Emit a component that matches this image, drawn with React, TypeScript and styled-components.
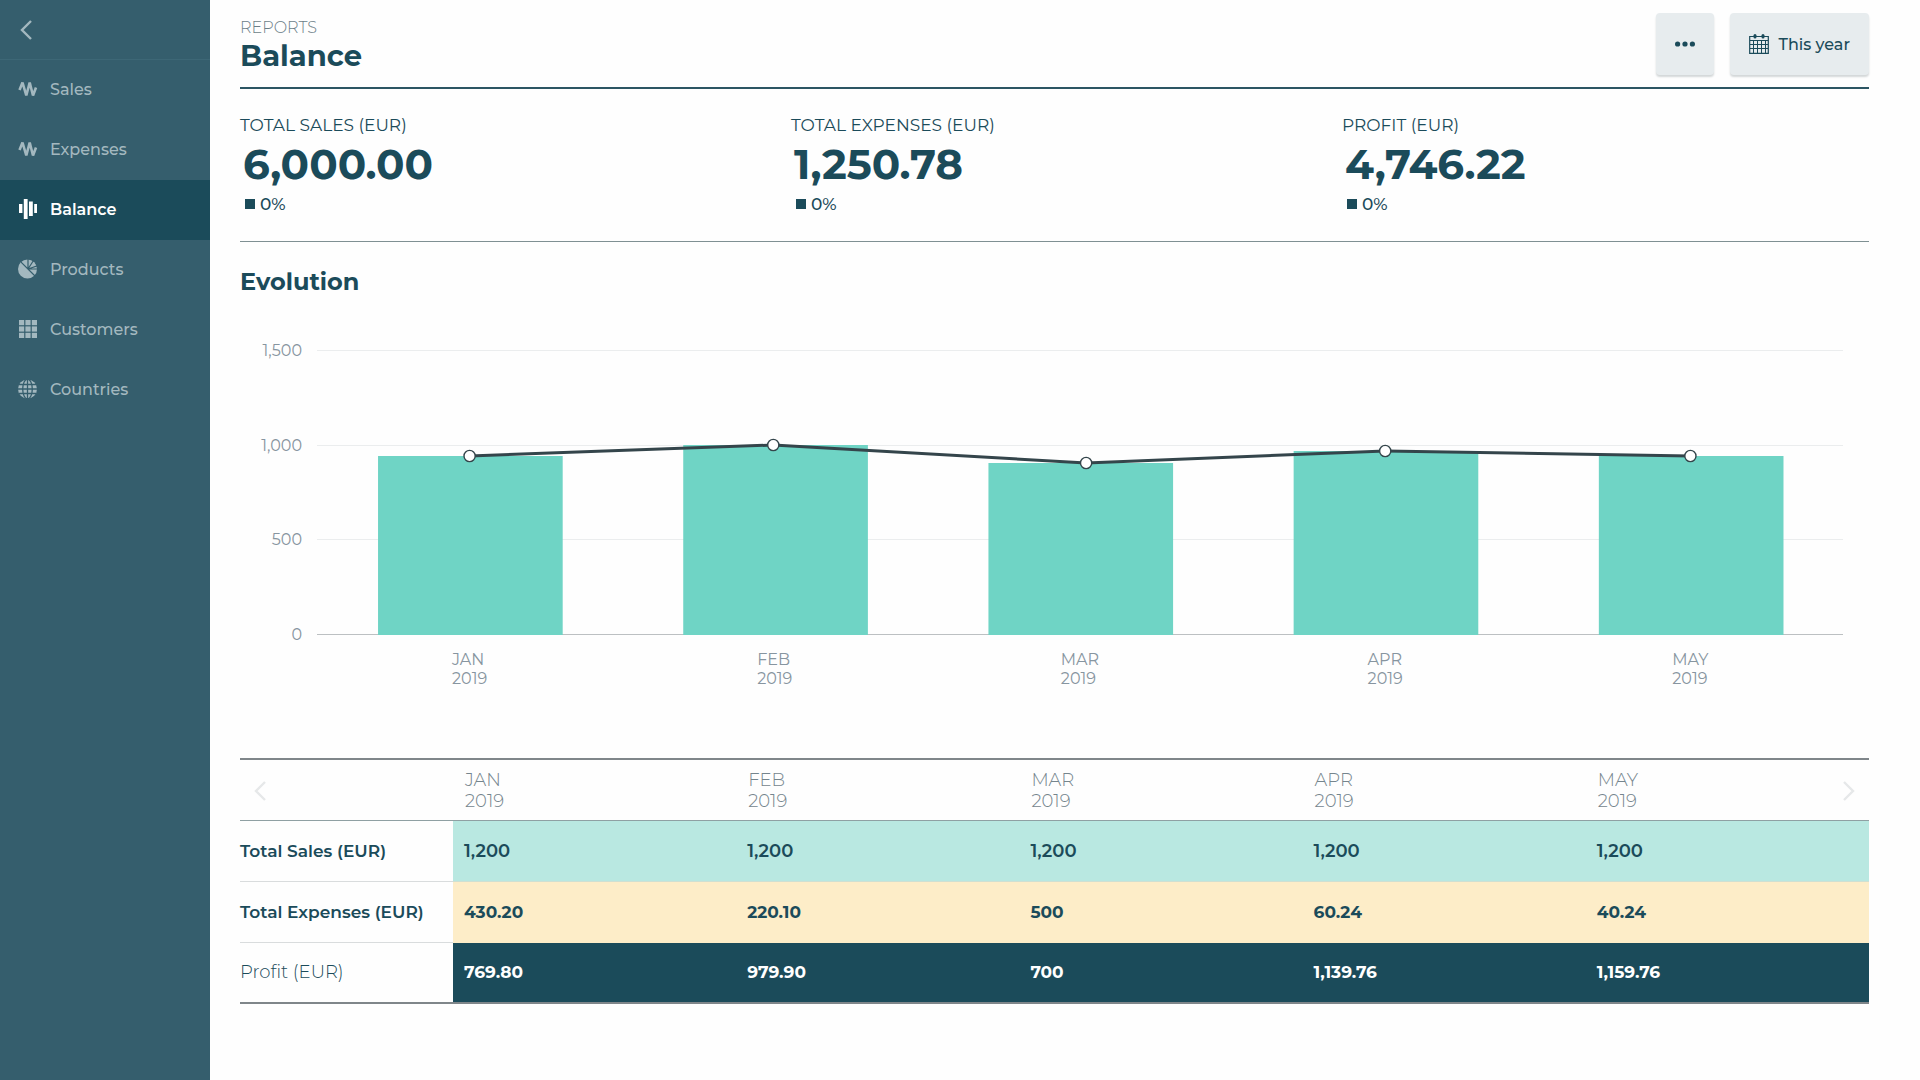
import React from "react";
import styled, { createGlobalStyle } from "styled-components";

const ink = "#1b4b5a";
const muted = "#8795a0";

const GlobalStyle = createGlobalStyle`
  *, *::before, *::after { box-sizing: border-box; }
  body {
    margin: 0;
    background: #fefefe;
    color: ${ink};
    font-family: Montserrat, Inter, "Liberation Sans", sans-serif;
    font-size: 16px;
  }
  button { font: inherit; color: inherit; border: 0; background: none; padding: 0; cursor: pointer; }
  h1, h2, p, dl, dd, dt, ul { margin: 0; padding: 0; }
`;

const Page = styled.div`
  display: grid;
  grid-template-columns: 210px minmax(0, 1fr);
  min-height: 100vh;
`;

/* Sidebar */

const Sidebar = styled.nav`
  background: #355e6d;
  color: #a3b8bf;
`;

const BackButton = styled.button`
  display: flex;
  align-items: center;
  width: 100%;
  height: 60px;
  padding: 0 18px;
  border-bottom: 1px solid #3d6776;
`;

const NavList = styled.ul`
  list-style: none;
`;

const NavLink = styled.a<{ $active: boolean }>`
  display: flex;
  align-items: center;
  gap: 12px;
  height: 60px;
  padding: 0 18px 2px;
  font-weight: ${(p) => (p.$active ? 600 : 500)};
  text-decoration: none;
  color: ${(p) => (p.$active ? "#ffffff" : "inherit")};
  background: ${(p) => (p.$active ? ink : "transparent")};
`;

/* Main column */

const Main = styled.main`
  padding: 0 51px 0 30px;
`;

const Header = styled.header`
  display: flex;
  justify-content: space-between;
  align-items: flex-start;
  height: 89px;
  padding-top: 13px;
  border-bottom: 2px solid #2c5563;
`;

const Eyebrow = styled.p`
  padding-top: 2px;
  line-height: 26px;
  font-weight: 300;
  color: #6c7f88;
`;

const Title = styled.h1`
  font-size: 29px;
  line-height: 29px;
  font-weight: 700;
`;

const Actions = styled.div`
  display: flex;
  gap: 16px;
`;

const ActionButton = styled.button`
  display: flex;
  align-items: center;
  gap: 10px;
  height: 62px;
  padding: 0 19px;
  border-radius: 4px;
  background: #e7ecee;
  box-shadow: 0 2px 2px #d3d7d8;
  font-weight: 500;
`;

const Kpis = styled.dl`
  display: grid;
  grid-template-columns: repeat(3, minmax(0, 1fr));
  gap: 24px;
  height: 153px;
  padding-top: 24px;
  border-bottom: 1px solid #7f9093;
`;

const KpiLabel = styled.dt`
  font-size: 17px;
  line-height: 24px;
`;

const KpiValue = styled.dd`
  padding-left: 3px;
  font-size: 42px;
  line-height: 54px;
  font-weight: 700;
`;

const KpiChange = styled.dd`
  display: flex;
  align-items: center;
  gap: 5px;
  padding-left: 5px;
  font-size: 17px;
  line-height: 26px;
  font-weight: 500;

  &::before {
    content: "";
    width: 10px;
    height: 10px;
    background: ${ink};
  }
`;

const SectionTitle = styled.h2`
  padding: 24px 0;
  font-size: 24px;
  line-height: 32px;
  font-weight: 700;
`;

/* Chart */

const Chart = styled.figure`
  display: grid;
  grid-template-columns: 62px minmax(0, 1fr);
  column-gap: 15px;
  margin: 0 26px 0 0;
  padding-top: 19px;
  color: ${muted};
`;

const YAxis = styled.div`
  display: flex;
  flex-direction: column;
  justify-content: space-between;
  height: 304px;
  line-height: 20px;
  text-align: right;
`;

const Plot = styled.svg`
  display: block;
  width: 100%;
  height: 304px;
`;

const XAxis = styled.div`
  grid-column: 2;
  display: grid;
  grid-template-columns: repeat(5, minmax(0, 1fr));
  justify-items: center;
  padding-top: 5px;
  line-height: 19px;
`;

/* Table */

const Table = styled.table`
  width: 100%;
  margin-top: 70px;
  table-layout: fixed;
  border-collapse: collapse;
  border-top: 2px solid #7f868a;
  border-bottom: 2px solid #7f868a;
`;

const LabelCol = styled.col`
  width: 213px;
`;

const HeadCell = styled.th`
  height: 61px;
  padding: 2px 12px 0;
  border-bottom: 1px solid #8fa0a3;
  color: #75858d;
  font-size: 18px;
  line-height: 21px;
  font-weight: 300;
  text-align: left;
`;

const HeadContent = styled.div`
  display: flex;
  justify-content: space-between;
  align-items: center;
`;

const PagerButton = styled.button`
  display: flex;
  color: #e6e8e9;
`;

const RowHead = styled.th<{ $light?: boolean }>`
  height: 60px;
  padding: 0;
  border-bottom: 1px solid #d9dcdd;
  font-size: ${(p) => (p.$light ? 18 : 17)}px;
  font-weight: ${(p) => (p.$light ? 300 : 600)};
  text-align: left;
`;

type Tone = "sales" | "expenses" | "profit";

const tones: Record<Tone, { background: string; color: string; border: string }> = {
  sales: { background: "#b9e8e1", color: ink, border: "#cfe0d2" },
  expenses: { background: "#fdedc8", color: ink, border: "#fdedc8" },
  profit: { background: ink, color: "#ffffff", border: ink },
};

const ValueCell = styled.td<{ $tone: Tone }>`
  height: 61px;
  padding: 0 11px;
  background: ${(p) => tones[p.$tone].background};
  color: ${(p) => tones[p.$tone].color};
  border-bottom: 1px solid ${(p) => tones[p.$tone].border};
  font-size: ${(p) => (p.$tone === "sales" ? 18 : 17)}px;
  font-weight: ${(p) => (p.$tone === "sales" ? 600 : 700)};
`;

/* Icons */

const Icon = ({ children }: { children: React.ReactNode }) => (
  <svg width="20" height="20" viewBox="0 0 20 20" fill="currentColor" aria-hidden="true">
    {children}
  </svg>
);

const WaveIcon = () => (
  <Icon>
    <path
      d="M1.500 11 4.500 3.500 8.300 16.500 11.700 3.500 15 16.500 18 8.500"
      fill="none"
      stroke="currentColor"
      strokeWidth="2.600"
      strokeLinejoin="bevel"
    />
  </Icon>
);

const BalanceIcon = () => (
  <Icon>
    <path d="M1 5h3.400v9H1zM5.800 0h3.800v20H5.800zM11 2.500h3.800V17H11zM16.200 5H19v9h-2.800z" />
  </Icon>
);

const PieIcon = () => (
  <Icon>
    <circle cx="9.500" cy="10" r="9.500" />
    <path
      d="M10 0v10M10 10 15.500 1.500M10 10 20 6.500M10 10h10M2.800 2.800 17 17"
      stroke="#355e6d"
      strokeWidth="1.200"
      fill="none"
    />
  </Icon>
);

const GridIcon = () => (
  <Icon>
    {[1, 7.4, 13.8].map((y) =>
      [1, 7.4, 13.8].map((x) => <rect key={`${x}-${y}`} x={x} y={y} width="5.200" height="5.200" />)
    )}
  </Icon>
);

const GlobeIcon = () => (
  <Icon>
    <circle cx="9.500" cy="10" r="9.500" />
    <g stroke="#355e6d" strokeWidth="1.300" fill="none">
      <path d="M9.500 0v20M1 5.500h17M0 10h19M1 14.500h17" />
      <ellipse cx="9.500" cy="10" rx="4.800" ry="9.800" />
    </g>
  </Icon>
);

const CalendarIcon = () => (
  <Icon>
    <g fill="none" stroke="currentColor">
      <path d="M.7 2.500h18.600v16.800H.7z" strokeWidth="1.200" />
      <path d="M1 6.500h18M1 10.500h18M1 14.500h18M4.500 6.500v13M8.500 6.500v13M12.500 6.500v13M16.500 6.500v13" />
    </g>
    <rect x="4.500" y="0" width="3" height="4.500" rx="1.500" />
    <rect x="12.500" y="0" width="3" height="4.500" rx="1.500" />
  </Icon>
);

const DotsIcon = () => (
  <Icon>
    <circle cx="2.600" cy="10" r="2.600" />
    <circle cx="10" cy="10" r="2.600" />
    <circle cx="17.400" cy="10" r="2.600" />
  </Icon>
);

const Chevron = ({ right }: { right?: boolean }) => (
  <svg width="16" height="22" viewBox="0 0 16 22" aria-hidden="true">
    <path
      d={right ? "M3 2l9 9-9 9" : "M13 2 4 11l9 9"}
      fill="none"
      stroke="currentColor"
      strokeWidth="2.400"
    />
  </svg>
);

/* Data */

const navItems = [
  { label: "Sales", icon: <WaveIcon /> },
  { label: "Expenses", icon: <WaveIcon /> },
  { label: "Balance", icon: <BalanceIcon />, active: true },
  { label: "Products", icon: <PieIcon /> },
  { label: "Customers", icon: <GridIcon /> },
  { label: "Countries", icon: <GlobeIcon /> },
];

const kpis = [
  { label: "TOTAL SALES (EUR)", value: "6,000.00" },
  { label: "TOTAL EXPENSES (EUR)", value: "1,250.78" },
  { label: "PROFIT (EUR)", value: "4,746.22" },
];

const months = ["JAN", "FEB", "MAR", "APR", "MAY"];

const series = [
  { value: 942, x: 10 },
  { value: 1000, x: 29.9 },
  { value: 904, x: 50.4 },
  { value: 966, x: 70 },
  { value: 942, x: 90 },
];

const rows: { label: string; tone: Tone; values: string[] }[] = [
  { label: "Total Sales (EUR)", tone: "sales", values: ["1,200", "1,200", "1,200", "1,200", "1,200"] },
  { label: "Total Expenses (EUR)", tone: "expenses", values: ["430.20", "220.10", "500", "60.24", "40.24"] },
  { label: "Profit (EUR)", tone: "profit", values: ["769.80", "979.90", "700", "1,139.76", "1,159.76"] },
];

const baseline = 293;
const scaleY = (value: number) => Math.round(baseline - (value / 1500) * 284);

const EvolutionPlot = () => (
  <Plot role="img" aria-label="Monthly balance, January to May 2019">
    {[1500, 1000, 500].map((tick) => (
      <rect key={tick} x="0" y={scaleY(tick)} width="100%" height="1" fill="#ebedee" />
    ))}
    <rect x="0" y={baseline} width="100%" height="1" fill="#bcc0c2" />
    {series.map((point, i) => (
      <rect
        key={i}
        x={`${i * 20 + 4}%`}
        y={scaleY(point.value)}
        width="12.1%"
        height={baseline + 1 - scaleY(point.value)}
        fill="#6fd4c5"
      />
    ))}
    {series.slice(1).map((point, i) => (
      <line
        key={i}
        x1={`${series[i].x}%`}
        y1={scaleY(series[i].value)}
        x2={`${point.x}%`}
        y2={scaleY(point.value)}
        stroke="#34454b"
        strokeWidth="3"
      />
    ))}
    {series.map((point, i) => (
      <circle
        key={i}
        cx={`${point.x}%`}
        cy={scaleY(point.value)}
        r="5.600"
        fill="#fff"
        stroke="#34454b"
        strokeWidth="1.400"
      />
    ))}
  </Plot>
);

export default function App() {
  return (
    <>
      <GlobalStyle />
      <Page>
        <Sidebar aria-label="Reports">
          <BackButton type="button" aria-label="Back">
            <Chevron />
          </BackButton>
          <NavList>
            {navItems.map((item) => (
              <li key={item.label}>
                <NavLink
                  href={`#${item.label.toLowerCase()}`}
                  $active={!!item.active}
                  aria-current={item.active ? "page" : undefined}
                >
                  {item.icon}
                  {item.label}
                </NavLink>
              </li>
            ))}
          </NavList>
        </Sidebar>

        <Main>
          <Header>
            <div>
              <Eyebrow>REPORTS</Eyebrow>
              <Title>Balance</Title>
            </div>
            <Actions>
              <ActionButton type="button" aria-label="More actions">
                <DotsIcon />
              </ActionButton>
              <ActionButton type="button">
                <CalendarIcon />
                This year
              </ActionButton>
            </Actions>
          </Header>

          <Kpis>
            {kpis.map((kpi) => (
              <div key={kpi.label}>
                <KpiLabel>{kpi.label}</KpiLabel>
                <KpiValue>{kpi.value}</KpiValue>
                <KpiChange>0%</KpiChange>
              </div>
            ))}
          </Kpis>

          <SectionTitle>Evolution</SectionTitle>
          <Chart>
            <YAxis>
              {["1,500", "1,000", "500", "0"].map((tick) => (
                <span key={tick}>{tick}</span>
              ))}
            </YAxis>
            <EvolutionPlot />
            <XAxis>
              {months.map((month) => (
                <div key={month}>
                  {month}
                  <br />
                  2019
                </div>
              ))}
            </XAxis>
          </Chart>

          <Table>
            <colgroup>
              <LabelCol />
              {months.map((month) => (
                <col key={month} />
              ))}
            </colgroup>
            <thead>
              <tr>
                <HeadCell>
                  <PagerButton type="button" aria-label="Earlier months">
                    <Chevron />
                  </PagerButton>
                </HeadCell>
                {months.map((month, i) => (
                  <HeadCell key={month} scope="col">
                    <HeadContent>
                      <span>
                        {month}
                        <br />
                        2019
                      </span>
                      {i === months.length - 1 && (
                        <PagerButton type="button" aria-label="Later months">
                          <Chevron right />
                        </PagerButton>
                      )}
                    </HeadContent>
                  </HeadCell>
                ))}
              </tr>
            </thead>
            <tbody>
              {rows.map((row) => (
                <tr key={row.label}>
                  <RowHead scope="row" $light={row.tone === "profit"}>
                    {row.label}
                  </RowHead>
                  {row.values.map((value, i) => (
                    <ValueCell key={i} $tone={row.tone}>
                      {value}
                    </ValueCell>
                  ))}
                </tr>
              ))}
            </tbody>
          </Table>
        </Main>
      </Page>
    </>
  );
}
